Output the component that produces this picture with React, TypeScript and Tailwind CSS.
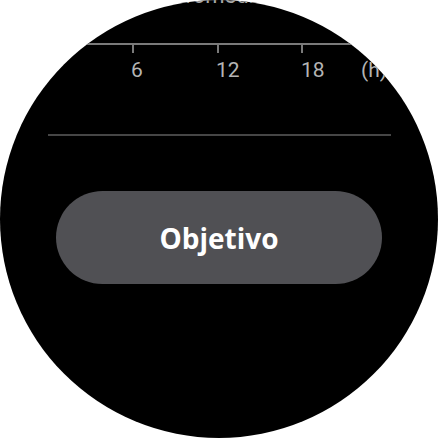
export default function App() {
  const ticks = [49, 133, 218, 302, 386];
  const labels = [
    { x: 131, t: "6" },
    { x: 216, t: "12" },
    { x: 301, t: "18" },
    { x: 361, t: "(h)" },
  ];

  return (
    <div className="h-[438px] w-[438px] bg-white font-['Roboto',sans-serif]">
      <div className="flex h-[438px] w-[438px] flex-col items-center overflow-hidden rounded-full bg-black">
        {/* title mostly scrolled off the top */}
        <p className="-mt-[18px] h-[23px] text-[22px] leading-[27px] text-[#a8a8a8]">Promedio</p>

        {/* hour axis of the chart above */}
        <svg width="438" height="80" viewBox="0 0 438 80" className="shrink-0">
          <line x1="0" y1="39" x2="438" y2="39" stroke="#7a7a7a" strokeWidth="2" />
          {ticks.map((x) => (
            <line key={x} x1={x} y1="39" x2={x} y2="48" stroke="#7a7a7a" strokeWidth="2" />
          ))}
          {labels.map((l) => (
            <text key={l.t} x={l.x} y="72" fill="#b4b4b4" fontSize="21" fontFamily="Roboto, sans-serif">
              {l.t}
            </text>
          ))}
        </svg>

        <div className="mt-[49px] h-[2px] w-[343px] shrink-0 bg-[#464646]" />

        <button className="mt-[55px] flex h-[93px] w-[326px] shrink-0 items-center justify-center rounded-full bg-[#505054] font-['Open_Sans',sans-serif] text-[28px] font-bold text-white">
          Objetivo
        </button>
      </div>
    </div>
  );
}
